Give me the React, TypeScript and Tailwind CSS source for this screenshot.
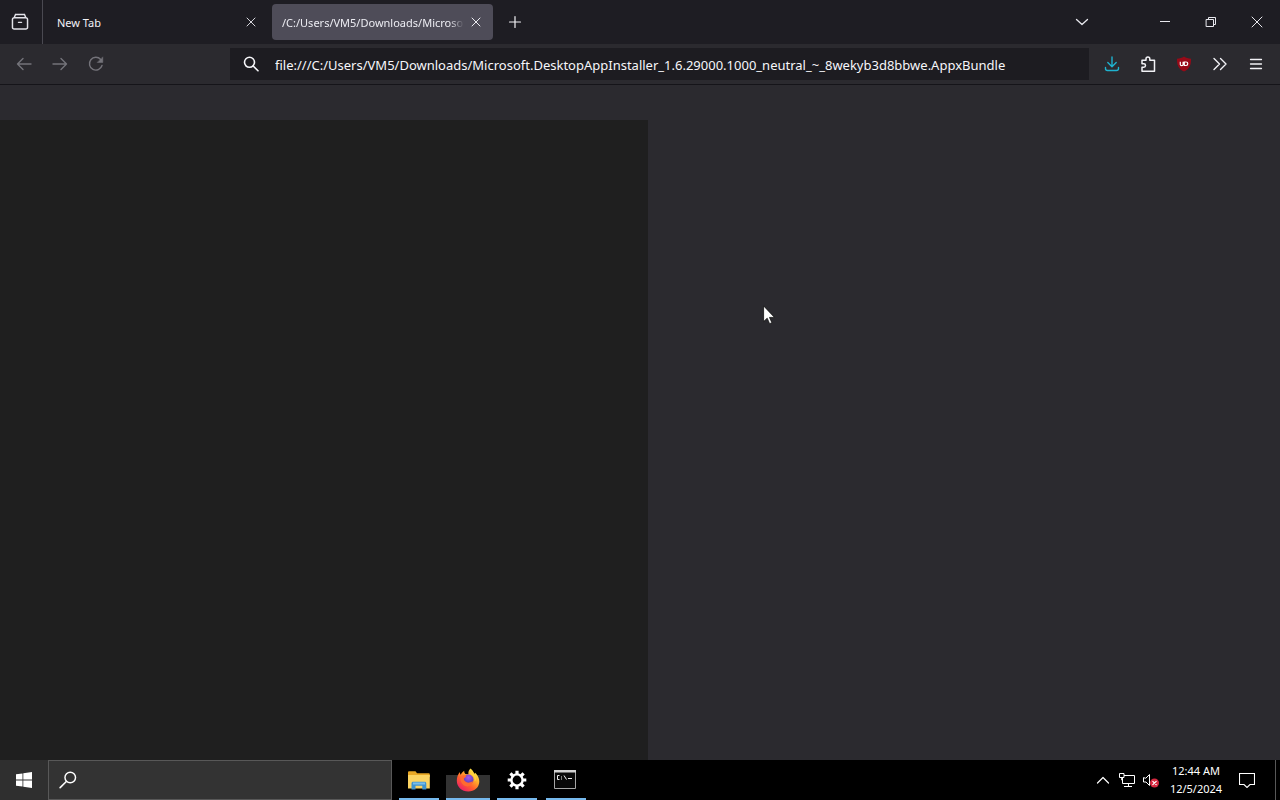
import type { ReactNode } from "react";

type IconButtonProps = { label: string; className?: string; disabled?: boolean; children: ReactNode };

function IconButton({ label, className = "", disabled, children }: IconButtonProps) {
  return (
    <button type="button" aria-label={label} disabled={disabled} className={`flex shrink-0 items-center justify-center ${className}`}>
      {children}
    </button>
  );
}

function Icon({ children, className = "size-4" }: { children: ReactNode; className?: string }) {
  return (
    <svg viewBox="0 0 16 16" className={className} fill="none" stroke="currentColor" strokeWidth="1.4" strokeLinecap="round" strokeLinejoin="round" aria-hidden="true">
      {children}
    </svg>
  );
}

function CloseIcon() {
  return (
    <Icon>
      <path d="M4 4l8 8M12 4l-8 8" strokeWidth="1" />
    </Icon>
  );
}

function TabStrip() {
  return (
    <header className="flex h-11 shrink-0 items-center bg-[#1e1d23]">
      <IconButton label="View recent browsing" className="h-11 w-[42px] pr-0.5 text-[#e4e4ea]">
        <Icon className="size-[18px]">
          <path d="M4 1.300h8M2.800 4.300h10.400a1.500 1.500 0 0 1 1.500 1.500v7a1.500 1.500 0 0 1-1.500 1.500H2.800a1.500 1.500 0 0 1-1.500-1.500v-7a1.500 1.500 0 0 1 1.500-1.500zM2.800 4.200L4 1.400M13.200 4.200L12 1.400" strokeWidth="1.300" />
          <path d="M6.600 8.300h2.800" strokeWidth="1.200" />
        </Icon>
      </IconButton>
      <div role="tablist" className="flex h-full items-center">
        <div role="tab" aria-selected="false" className="flex h-full w-[226px] items-center border-l border-[#4a4951] pr-[5px] pl-3.5 text-[#f2f2f6]">
          <span className="grow pt-0.5 text-[11px]">New Tab</span>
          <IconButton label="Close New Tab" className="size-6 text-[#d6d6dc]">
            <CloseIcon />
          </IconButton>
        </div>
        <div role="tab" aria-selected="true" className="ml-1 flex h-9 w-[221px] items-center rounded bg-[#4e4c58] pr-[5px] pl-2.5 text-[#ececf2]">
          <span className="min-w-0 grow overflow-hidden mask-r-from-92% pt-0.5 text-[11px] whitespace-nowrap">/C:/Users/VM5/Downloads/Microsoft</span>
          <IconButton label="Close tab" className="size-6">
            <CloseIcon />
          </IconButton>
        </div>
      </div>
      <IconButton label="New tab" className="size-11 text-[#f2f2f6]">
        <Icon>
          <path d="M8 2.500v11M2.500 8h11" strokeWidth="1.200" />
        </Icon>
      </IconButton>
      <div className="ml-auto flex h-full items-center text-[#e8e8ee]">
        <IconButton label="List all tabs" className="mr-11 h-full w-8">
          <Icon>
            <path d="M2.500 5.500L8 10.500l5.500-5" strokeWidth="1.300" />
          </Icon>
        </IconButton>
        <IconButton label="Minimize" className="h-full w-[46px]">
          <Icon>
            <path d="M3 7.500h10" strokeWidth="1" strokeLinecap="butt" />
          </Icon>
        </IconButton>
        <IconButton label="Restore" className="h-full w-[46px]">
          <Icon>
            <path d="M3.500 5.500h7v7h-7zM5.500 5.500v-2h7v7h-2" strokeWidth="1" strokeLinejoin="miter" />
          </Icon>
        </IconButton>
        <IconButton label="Close window" className="h-full w-[46px]">
          <Icon>
            <path d="M3 3l10 10M13 3L3 13" strokeWidth="1" />
          </Icon>
        </IconButton>
      </div>
    </header>
  );
}

function NavBar() {
  return (
    <nav className="flex h-[41px] shrink-0 items-center border-b border-[#151419] bg-[#2b2a2f]">
      <div className="flex w-[230px] shrink-0 pl-1.5 text-[#74737a]">
        <IconButton label="Back" disabled className="h-10 w-9">
          <Icon>
            <path d="M15 8H1.500M7 2.500L1.500 8 7 13.500" />
          </Icon>
        </IconButton>
        <IconButton label="Forward" disabled className="h-10 w-9">
          <Icon>
            <path d="M1 8h13.500M9 2.500L14.500 8 9 13.500" />
          </Icon>
        </IconButton>
        <IconButton label="Reload" disabled className="h-10 w-9">
          <Icon>
            <path d="M14 9.500A6.400 6.400 0 1 1 12.700 3.500" />
            <path d="M14.800 1.200v5.300H9.500z" fill="currentColor" strokeWidth="0.500" />
          </Icon>
        </IconButton>
      </div>
      <div className="flex h-8 min-w-0 grow items-center bg-[#1d1c21] pl-[13px] text-[#f6f6fa]">
        <Icon className="mr-4 size-4 shrink-0">
          <circle cx="6.500" cy="6.300" r="5" strokeWidth="1.600" />
          <path d="M10.200 10L15 14.800" strokeWidth="1.600" />
        </Icon>
        <input
          type="text"
          aria-label="Address"
          spellCheck={false}
          defaultValue="file:///C:/Users/VM5/Downloads/Microsoft.DesktopAppInstaller_1.6.29000.1000_neutral_~_8wekyb3d8bbwe.AppxBundle"
          className="min-w-0 grow bg-transparent pt-[3px] text-[13px] outline-none"
        />
      </div>
      <div className="flex shrink-0 pr-1.5 pl-[5px] text-[#f2f2f6]">
        <IconButton label="Downloads" className="h-10 w-9 text-[#1fb2cf]">
          <Icon>
            <path d="M8 1v9.500M3.800 6.500L8 10.700l4.200-4.200M1.500 11.500v1a2 2 0 0 0 2 2h9a2 2 0 0 0 2-2v-1" />
          </Icon>
        </IconButton>
        <IconButton label="Extensions" className="h-10 w-9">
          <Icon>
            <path d="M2 4.300h4V2.800a1.900 1.900 0 0 1 3.800 0v1.500h4.700v10.900H2v-4h1.800a1.700 1.700 0 0 0 0-3.400H2z" strokeWidth="1.500" />
          </Icon>
        </IconButton>
        <IconButton label="uBlock Origin" className="h-10 w-9">
          <svg viewBox="0 0 16 16" className="size-4" aria-hidden="true">
            <path d="M8 .5c2 1.500 4.400 2 7 2.200 0 6.300-1 9.600-7 12.900C2 12.300 1 9 1 2.700 3.600 2.500 6 2 8 .5z" fill="#980a18" />
            <path d="M4.300 5.800v2.700c0 1.600 2.800 1.600 2.800 0V5.800M8.300 6h1.800c2.200 0 2.200 3.500 0 3.500H8.300z" fill="none" stroke="#fff" strokeWidth="1.200" />
          </svg>
        </IconButton>
        <IconButton label="More tools" className="h-10 w-9">
          <Icon>
            <path d="M2 2.500L7.500 8 2 13.500M8.500 2.500L14 8l-5.500 5.500" />
          </Icon>
        </IconButton>
        <IconButton label="Application menu" className="h-10 w-9">
          <Icon>
            <path d="M2.500 3.500h11M2.500 8h11M2.500 12.500h11" strokeWidth="1.300" />
          </Icon>
        </IconButton>
      </div>
    </nav>
  );
}

function FolderIcon() {
  return (
    <svg viewBox="0 0 24 24" className="size-6" aria-hidden="true">
      <path d="M1 4.500c0-.8.500-1.300 1.300-1.300h6.200l1.500 2h11.500c.8 0 1.300.5 1.300 1.300V9H1z" fill="#e9a825" />
      <path d="M1 7h21.800v13.500H1z" fill="#fcd462" />
      <path d="M4.500 21.500v-6c0-1.200.6-1.800 1.800-1.800h11.200c1.200 0 1.800.6 1.800 1.800v6h-4v-3.700H8.500v3.700z" fill="#3f93cf" />
      <path d="M6 14.500h12v2H6z" fill="#79bce8" />
    </svg>
  );
}

function FirefoxIcon() {
  return (
    <svg viewBox="0 0 24 24" className="size-6" aria-hidden="true">
      <defs>
        <linearGradient id="flame" x1="0.850" y1="0.100" x2="0.200" y2="0.950">
          <stop offset="0" stopColor="#fff04a" />
          <stop offset="0.350" stopColor="#ffa62b" />
          <stop offset="0.650" stopColor="#ff5b2e" />
          <stop offset="1" stopColor="#ec1e6b" />
        </linearGradient>
        <radialGradient id="globe" cx="0.500" cy="0.300" r="0.700">
          <stop offset="0" stopColor="#a259e8" />
          <stop offset="1" stopColor="#543bb5" />
        </radialGradient>
      </defs>
      <path d="M14.500.5c2 1.500 3.200 3.500 3.600 5.400l1.100-1.200c2.600 2.600 4.200 5.500 4.100 9C23.100 19.500 18.300 23.500 12.300 23.500 5.800 23.500.8 19 .8 12.800c0-3.400 1-6.200 3-8.800.1 1.300.4 2 .9 2.700C5.900 4.500 7 3.500 8.200 2.700c0 1.500.4 2.500 1.200 3.200l3 .3C12.200 4 12.800 1.800 14.500.5z" fill="url(#flame)" />
      <circle cx="12.500" cy="11.500" r="5" fill="url(#globe)" />
      <path d="M4.700 9c1.800-1.800 3.800-2.200 5.700-1.200-.4 1.600-2 1.800-2.700 3 .6 2.800 3 4.200 5.500 3.800 1.500-.2 2.600-.8 3.600-1.500-.3 3.600-3.400 5.800-6.500 5.200C5.700 17.200 4 12.800 4.700 9z" fill="#ff6a30" />
      <path d="M14 6c3 .8 5 3.500 4.700 7.500 1-1 1.400-2 1.400-3.500-.3-3-2-5-4-7z" fill="#ffd23d" />
    </svg>
  );
}

function GearIcon() {
  return (
    <svg viewBox="0 0 24 24" className="size-6" aria-hidden="true">
      <g stroke="#fff" fill="none">
        <circle cx="12" cy="12" r="5.600" strokeWidth="2.400" />
        <path d="M12 2.700v3.500M12 17.800v3.500M2.700 12h3.500M17.800 12h3.500M5.400 5.400l2.500 2.500M16.100 16.100l2.500 2.500M5.400 18.600l2.500-2.500M16.100 7.900l2.500-2.500" strokeWidth="3.200" />
      </g>
    </svg>
  );
}

function TerminalIcon() {
  return (
    <svg viewBox="0 0 24 24" className="size-6" aria-hidden="true">
      <path d="M.5 2.500h21v18H.5z" fill="#080808" stroke="#a6a6a6" />
      <path d="M0 2h22v2.500H0z" fill="#d2d2d2" />
      <path d="M5.500 7.500H3.500v4h2M7.500 8.500v1M7.500 10.500v1M10 7.500l2.500 4M14 10.500h4" stroke="#eee" fill="none" />
    </svg>
  );
}

function TaskApp({ label, active, children }: { label: string; active?: boolean; children: ReactNode }) {
  return (
    <button type="button" aria-label={label} className="relative flex h-10 w-10 items-center justify-center">
      {active && <span className="absolute inset-x-0 top-[15px] bottom-0 -mx-0.5 bg-[#333333]" />}
      <span className="relative">{children}</span>
      <span className={active ? "absolute inset-x-0 bottom-0 -mx-0.5 h-0.5 bg-[#76b9ed]" : "absolute inset-x-0 bottom-0 h-0.5 bg-[#76b9ed]"} />
    </button>
  );
}

function Taskbar() {
  return (
    <footer className="flex h-10 shrink-0 items-center bg-black text-white">
      <IconButton label="Start" className="h-10 w-12 bg-[#2f2f2f]">
        <svg viewBox="0 0 16 16" className="size-4" fill="#fff" aria-hidden="true">
          <path d="M0 2.300L6.500 1.400v6.200H0zM7.300 1.300L16 0v7.600H7.300zM0 8.400h6.500v6.200L0 13.700zM7.300 8.400H16V16l-8.700-1.300z" />
        </svg>
      </IconButton>
      <div className="flex h-10 w-[344px] items-center border border-[#585858] bg-[#333333] pl-2.5">
        <Icon className="size-[18px] shrink-0">
          <circle cx="10" cy="5.800" r="4.700" strokeWidth="1.300" />
          <path d="M6.500 9.300L1 14.800" strokeWidth="1.400" />
        </Icon>
        <input type="text" aria-label="Search" className="min-w-0 grow bg-transparent px-2 text-[13px] outline-none" />
      </div>
      <div className="ml-[7px] flex gap-[9px]">
        <TaskApp label="File Explorer"><FolderIcon /></TaskApp>
        <TaskApp label="Firefox" active><FirefoxIcon /></TaskApp>
        <TaskApp label="Settings"><GearIcon /></TaskApp>
        <TaskApp label="Command Prompt"><TerminalIcon /></TaskApp>
      </div>
      <div className="ml-auto flex h-full items-center">
        <IconButton label="Show hidden icons" className="h-full w-6">
          <Icon>
            <path d="M2.500 11L8 5.500l5.500 5.500" strokeWidth="1.200" />
          </Icon>
        </IconButton>
        <IconButton label="Network" className="h-full w-6">
          <Icon>
            <path d="M5 3.500h10.500v8H3.500V6M.5 1.500H5v4H.500zM2.700 5.500V8h.8M9.500 11.500v3M5 14.500h8" strokeWidth="1" strokeLinecap="butt" strokeLinejoin="miter" />
          </Icon>
        </IconButton>
        <IconButton label="Volume muted" className="h-full w-6">
          <Icon>
            <path d="M.5 6v4h2.500l3.500 3.500v-11L3 6z" strokeWidth="1" />
            <circle cx="11.500" cy="11" r="4.500" fill="#d5283f" stroke="none" />
            <path d="M9.800 9.300l3.400 3.400M13.200 9.300l-3.400 3.400" stroke="#fff" strokeWidth="1.200" />
          </Icon>
        </IconButton>
        <button type="button" className="flex h-full w-[66px] flex-col items-center justify-center text-[11px] leading-[18px] whitespace-nowrap">
          <span>12:44 AM</span>
          <span>12/5/2024</span>
        </button>
        <IconButton label="Notifications" className="h-full w-9">
          <Icon>
            <path d="M.5 1.500h15v11H11L8 15.500l-3-3H.5z" strokeWidth="1.100" strokeLinejoin="miter" />
          </Icon>
        </IconButton>
        <button type="button" aria-label="Show desktop" className="ml-2.5 h-full w-[5px] border-l border-[#585858]" />
      </div>
    </footer>
  );
}

export default function App() {
  return (
    <div className="relative flex h-screen flex-col overflow-hidden bg-[#2b2a2f] font-['Noto_Sans','Open_Sans',sans-serif]">
      <TabStrip />
      <NavBar />
      <main className="flex min-h-0 grow flex-col pt-[35px]">
        <section aria-label="Page content" className="w-[50.625%] grow bg-[#1f1f1f]" />
      </main>
      <Taskbar />
      <svg viewBox="0 0 12 20" className="pointer-events-none absolute top-[305px] left-[763px] h-5 w-3" aria-hidden="true">
        <path d="M.6.900v15.700l3.600-3.400 2.400 5.500 2.300-1-2.400-5.300h5z" fill="#fff" stroke="#111" strokeWidth="0.800" />
      </svg>
    </div>
  );
}
